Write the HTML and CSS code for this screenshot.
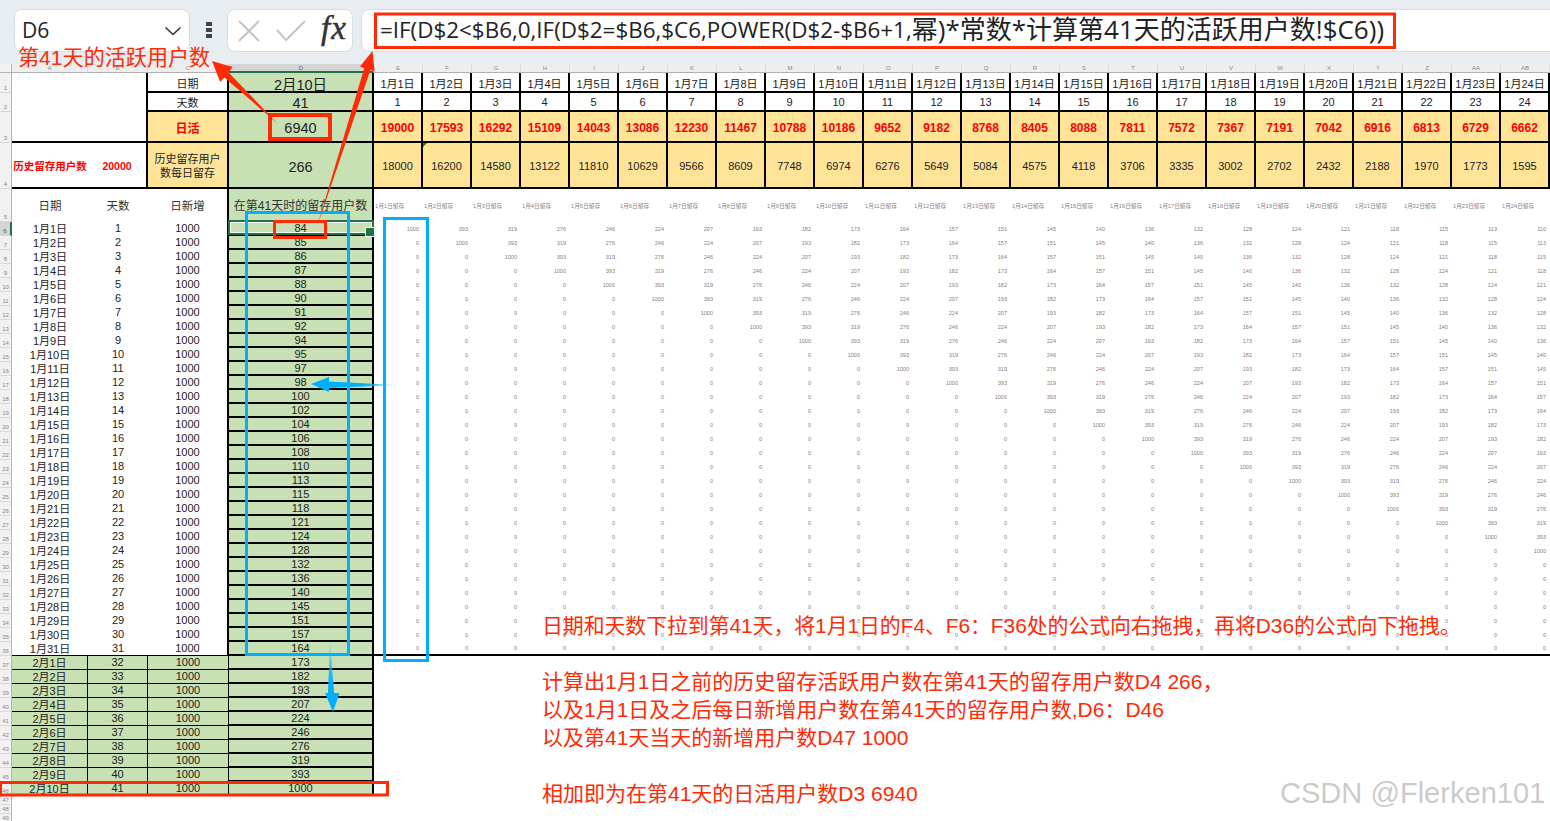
FILE: index.html
```html
<!DOCTYPE html>
<html lang="zh-CN">
<head>
<meta charset="utf-8">
<title>第41天的活跃用户数</title>
<link rel="stylesheet" href="styles.css">
</head>
<body>
<div class="page">
  <header class="toolbar">
    <div class="namebox">
      <span class="cellref">D6</span>
      <svg class="chevron" width="18" height="10" viewBox="0 0 18 10"><path d="M1.5 1.5 9 8.5 16.5 1.5" fill="none" stroke="#333" stroke-width="1.6"/></svg>
    </div>
    <div class="dots"><i></i><i></i><i></i></div>
    <div class="fxbox">
      <svg class="fxicon" width="24" height="24" viewBox="0 0 24 24"><path d="M2 2 22 22M22 2 2 22" fill="none" stroke="#c4c4c4" stroke-width="2"/></svg>
      <svg class="fxicon" width="30" height="24" viewBox="0 0 30 24"><path d="M1 11 10 21 29 2" fill="none" stroke="#c4c4c4" stroke-width="2"/></svg>
      <span class="fx">fx</span>
    </div>
    <div class="formula">=IF(D$2&lt;$B6,0,IF(D$2=$B6,$C6,POWER(D$2-$B6+1,<span class="tail">幂)*常数*计算第41天的活跃用户数!$C6))</span></div>
  </header>
  <main class="sheet" id="sheet"></main>
</div>

<svg class="marks" width="1550" height="821" viewBox="0 0 1550 821">
  <defs>
    <linearGradient id="fadeLeft" x1="0" x2="1" y1="0" y2="0">
      <stop offset="0.6" stop-color="#00b0ff"/><stop offset="1" stop-color="#00b0ff" stop-opacity="0.1"/>
    </linearGradient>
    <linearGradient id="fadeDown" x1="0" x2="0" y1="0" y2="1">
      <stop offset="0" stop-color="#00b0ff" stop-opacity="0.1"/><stop offset="0.6" stop-color="#00b0ff"/>
    </linearGradient>
  </defs>
  <rect class="box-red" x="375.5" y="14" width="1019" height="33.5"/>
  <rect class="box-red thick" x="270" y="115" width="60" height="24"/>
  <rect class="box-red" x="274.5" y="221.5" width="51" height="16"/>
  <rect class="box-red" x="0.5" y="782.5" width="387" height="12.5"/>
  <rect class="box-blue" x="246.5" y="212.5" width="102" height="442"/>
  <rect class="box-blue" x="384.5" y="218.5" width="43" height="442"/>
  <polygon class="arrow-red" points="212,61 232.6,67 228.6,72.4 277,123 224.4,77.6 220.2,82"/>
  <polygon class="arrow-red" points="372.5,51 374.6,71.4 370.4,70 317,227 364.2,68.2 360,66.6"/>
  <polygon points="311,384 329,377 329,381.5 398,385 329,388 329,392" fill="url(#fadeLeft)"/>
  <polygon points="330,640 334,693 339.5,693 333,712 325,693 328,693" fill="url(#fadeDown)"/>
</svg>

<div class="note note-title">第41天的活跃用户数</div>
<div class="note note-drag">日期和天数下拉到第41天，将1月1日的F4、F6：F36处的公式向右拖拽，再将D36的公式向下拖拽。</div>
<div class="note note-sum">
  <p>计算出1月1日之前的历史留存活跃用户数在第41天的留存用户数D4 266，</p>
  <p>以及1月1日及之后每日新增用户数在第41天的留存用户数,D6：D46</p>
  <p>以及第41天当天的新增用户数D47 1000</p>
  <p>&nbsp;</p>
  <p>相加即为在第41天的日活用户数D3 6940</p>
</div>
<div class="watermark">CSDN @Flerken101</div>

<script src="app.js"></script>
</body>
</html>
```

FILE: styles.css
```css
* { box-sizing: border-box; }

html, body {
  margin: 0;
  padding: 0;
  background: #fff;
}

body {
  width: 1550px;
  height: 821px;
  overflow: hidden;
  position: relative;
  font-family: "Liberation Sans", "Noto Sans CJK SC", sans-serif;
  color: #222;
}

.page {
  display: flex;
  flex-direction: column;
  height: 821px;
  overflow: hidden;
}

/* ---------- formula bar ---------- */
.toolbar {
  flex: none;
  height: 64px;
  display: flex;
  align-items: flex-start;
  padding: 9px 0 0 14px;
  background: #e8edf1;
}

.namebox,
.fxbox,
.formula {
  height: 43px;
  background: #fff;
  border: 1px solid #d9dde1;
  border-radius: 8px;
  display: flex;
  align-items: center;
}

.namebox {
  width: 176px;
  padding: 0 7px 2px 7px;
  justify-content: space-between;
}

.chevron { margin-top: 2px; }

.cellref {
  font-family: "Open Sans", "Noto Sans CJK SC", sans-serif;
  font-size: 21px;
  color: #222;
}

.dots {
  width: 37px;
  display: flex;
  flex-direction: column;
  align-items: center;
  gap: 2px;
  padding-top: 13px;
}

.dots i {
  display: block;
  width: 6px;
  height: 4px;
  background: #444;
}

.fxbox {
  width: 126px;
  padding: 0 0 0 9px;
  gap: 15px;
}

.fxicon { flex: none; }

.fx {
  flex: none;
  font-family: "Liberation Serif", serif;
  font-style: italic;
  font-size: 33px;
  line-height: 1;
  color: #333;
  letter-spacing: 1px;
  padding-bottom: 4px;
  -webkit-text-stroke: 0.5px #333;
}

.formula {
  flex: 1;
  margin: 0 -12px 0 8px;
  padding: 0 0 3px 18px;
  font-family: "Open Sans", "Noto Sans CJK SC", sans-serif;
  font-size: 22.4px;
  color: #222;
  white-space: pre;
  overflow: hidden;
}

.formula .tail { font-size: 26px; line-height: 1; }

/* ---------- sheet grid ---------- */
.sheet {
  flex: none;
  display: grid;
  grid-template-columns: 12px 76px 60px 81px 145px repeat(24, 49px);
  grid-template-rows: 9px 20px 19px 31px 46px 33px repeat(41, 14px) repeat(3, 9px);
  font-size: 11px;
}

.sheet > div {
  display: flex;
  align-items: center;
  justify-content: center;
  min-width: 0;
  white-space: nowrap;
}

.corner {
  background: #f2f2f2;
  border-right: 1px solid #b5b5b5;
  border-bottom: 1px solid #b5b5b5;
}

.sheet > .colhead {
  background: #eeeeee;
  border-bottom: 1px solid #b0b0b0;
  border-right: 1px solid #dcdcdc;
  font-size: 6px;
  color: #888;
}

.sheet > .colhead.active {
  background: #d4d4d4;
  border-bottom: 2px solid #217346;
  color: #666;
}

.sheet > .rowhead {
  background: #f1f1f1;
  border-right: 1px solid #b5b5b5;
  border-bottom: 1px solid #d8d8d8;
  font-size: 6px;
  color: #888;
  align-items: flex-end;
  line-height: 8px;
}

.sheet > .rowhead.active {
  background: #d4d4d4;
  border-right: 2px solid #217346;
  color: #555;
}

.sheet > .filler { grid-column: 2 / -1; }
.sheet > .filler-right { grid-column: 6 / -1; }

/* top block */
.line { border-right: 2px solid #000; border-bottom: 2px solid #000; padding-top: 1px; }
.white { background: #fff; }
.green { background: #c7e0b4; }
.yellow { background: #ffe498; }
.merged { grid-row: span 3; grid-column: span 2; }
.plain-bottom { border-bottom: 2px solid #000; }
.sheet > .big { font-size: 14.5px; padding-top: 3px; }
.sheet > .alert { color: #f00; font-weight: 700; font-size: 12px; padding-top: 2px; }
.sheet > .wrap { white-space: normal; text-align: center; line-height: 14px; padding: 2px 6px 0; }
.hist { color: #f00; font-weight: 700; font-size: 10.5px; }
.tick { position: relative; }
.tick::before {
  content: "";
  position: absolute;
  left: 0;
  top: 0;
  border-top: 4px solid #1a7a2c;
  border-right: 4px solid transparent;
}

/* body rows */
.sheet > .heading { font-size: 11.5px; color: #333; padding-bottom: 2px; }
.sheet > .d-head { font-size: 12px; color: #333; border-right: 2px solid #000; padding-bottom: 2px; }
.c-edge { border-right: 2px solid #000; }
.sheet > .left-cell { padding-bottom: 2px; }
.d-cell { background: #c7e0b4; border-right: 2px solid #000; border-bottom: 2px solid #000; line-height: 1; }
.sheet > .mini-label { font-size: 5.7px; color: #8a8285; justify-content: flex-start; padding-left: 1px; }
.sheet > .mini { font-size: 5.5px; color: #8a7a80; justify-content: flex-end; padding-right: 4px; }
.thick-bottom { border-bottom: 2px solid #000; }
.thin-bottom { border-bottom: 1px solid #000; }
.sheet > .g-cell { background: #c7e0b4; border-right: 1px solid #000; border-bottom: 1px solid #000; padding-bottom: 1px; }

/* selected cell */
.selected { position: relative; }
.selected::before {
  content: "";
  position: absolute;
  left: -1px;
  right: -2px;
  top: -2px;
  bottom: -1px;
  border: 2px solid #217346;
  box-shadow: inset 0 0 0 1px #fff;
}
.selected::after {
  content: "";
  position: absolute;
  right: -3px;
  bottom: -3px;
  width: 8px;
  height: 8px;
  background: #217346;
  border: 1px solid #fff;
}

/* ---------- annotations lying over the sheet ---------- */
.marks {
  position: absolute;
  left: 0;
  top: 0;
  pointer-events: none;
}

.box-red { fill: none; stroke: #ff2a06; stroke-width: 3; }
.box-red.thick { stroke-width: 4; }
.box-blue { fill: none; stroke: #00b0ff; stroke-width: 3; }
.arrow-red { fill: #ff2a06; }

.note {
  position: absolute;
  color: #ff2a06;
  white-space: nowrap;
  font-family: "Liberation Sans", "Noto Sans CJK SC", sans-serif;
}

.note p { margin: 0; }

.note-title { left: 18px; top: 44px; font-size: 21.1px; line-height: 28px; }
.note-drag { left: 542px; top: 612px; font-size: 20.9px; line-height: 28px; letter-spacing: -0.06px; }
.note-sum { left: 542px; top: 668px; font-size: 21px; line-height: 28px; }

.watermark {
  position: absolute;
  left: 1280px;
  top: 774px;
  font-size: 29.5px;
  line-height: 38px;
  white-space: nowrap;
  color: rgba(150, 150, 150, 0.5);
  transform: scaleX(0.985);
  transform-origin: left center;
}
```

FILE: app.js
```js
(function () {
  var sheet = document.getElementById('sheet');

  function cell(cls, text) {
    var d = document.createElement('div');
    d.className = cls || '';
    if (text !== undefined) d.textContent = text;
    sheet.appendChild(d);
    return d;
  }

  var colNames = 'ABCDEFGHIJKLMNOPQRSTUVWXYZ'.split('').concat(['AA', 'AB']);
  var days = 24;
  var active = [19000, 17593, 16292, 15109, 14043, 13086, 12230, 11467, 10788, 10186, 9652, 9182, 8768, 8405, 8088, 7811, 7572, 7367, 7191, 7042, 6916, 6813, 6729, 6662];
  var history = [18000, 16200, 14580, 13122, 11810, 10629, 9566, 8609, 7748, 6974, 6276, 5649, 5084, 4575, 4118, 3706, 3335, 3002, 2702, 2432, 2188, 1970, 1773, 1595];
  var kept = [84, 85, 86, 87, 88, 90, 91, 92, 94, 95, 97, 98, 100, 102, 104, 106, 108, 110, 113, 115, 118, 121, 124, 128, 132, 136, 140, 145, 151, 157, 164, 173, 182, 193, 207, 224, 246, 276, 319, 393, 1000];
  var decay = kept.slice().reverse();
  var i;

  /* column letters */
  cell('corner');
  colNames.forEach(function (n) {
    cell('colhead' + (n === 'D' ? ' active' : ''), n);
  });

  /* row 1 */
  cell('rowhead', '1');
  cell('white line merged');
  cell('white line', '日期');
  cell('green line big', '2月10日');
  for (i = 1; i <= days; i++) cell('white line', '1月' + i + '日');

  /* row 2 */
  cell('rowhead', '2');
  cell('white line', '天数');
  cell('green line big', '41');
  for (i = 1; i <= days; i++) cell('white line', String(i));

  /* row 3 */
  cell('rowhead', '3');
  cell('yellow line alert', '日活');
  cell('green line big', '6940');
  active.forEach(function (v) { cell('yellow line alert', String(v)); });

  /* row 4 */
  cell('rowhead', '4');
  cell('white plain-bottom hist', '历史留存用户数');
  cell('white line hist', '20000');
  cell('yellow line wrap', '历史留存用户数每日留存');
  cell('green line big', '266');
  history.forEach(function (v, idx) {
    cell('yellow line' + (idx === 1 ? ' tick' : ''), String(v));
  });

  /* row 5 */
  cell('rowhead', '5');
  cell('heading', '日期');
  cell('heading', '天数');
  cell('heading c-edge', '日新增');
  cell('green d-head', '在第41天时的留存用户数');
  for (i = 1; i <= days; i++) cell('mini-label', '1月' + i + '日留存');

  /* rows 6 to 46 */
  for (var r = 0; r < 41; r++) {
    var n = r + 1;
    var label = n <= 31 ? '1月' + n + '日' : '2月' + (n - 31) + '日';
    cell('rowhead' + (r === 0 ? ' active' : ''), String(r + 6));
    var last = r === 30;
    if (n <= 31) {
      var thin = last ? ' thin-bottom' : '';
      cell('left-cell' + thin, label);
      cell('left-cell' + thin, String(n));
      cell('left-cell c-edge' + thin, '1000');
      cell('d-cell' + (r === 0 ? ' selected' : ''), String(kept[r]));
      for (var c = 0; c < days; c++) {
        var v = c < r ? 0 : (c === r ? 1000 : decay[c - r]);
        cell('mini' + (last ? ' thick-bottom' : ''), String(v));
      }
    } else {
      cell('g-cell', label);
      cell('g-cell', String(n));
      cell('g-cell', '1000');
      cell('d-cell', String(kept[r]));
      cell('filler-right');
    }
  }

  /* rows 47 to 49 */
  for (i = 47; i <= 49; i++) {
    cell('rowhead', String(i));
    cell('filler');
  }
})();
```
